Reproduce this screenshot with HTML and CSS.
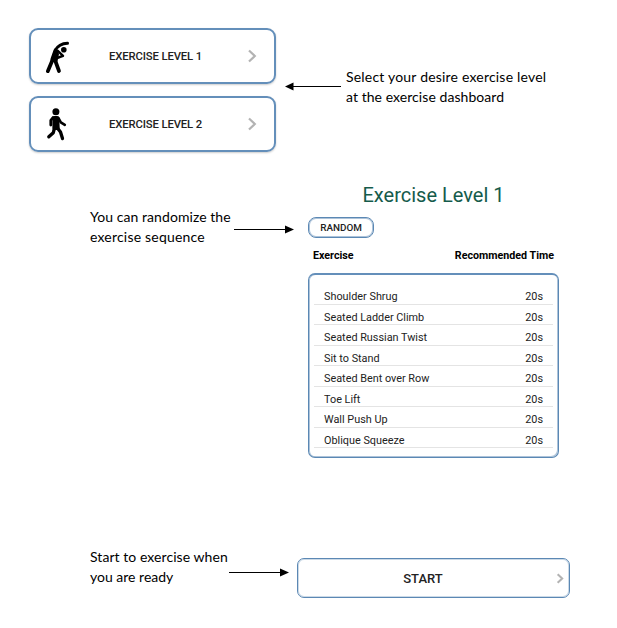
FILE: index.html
```html
<!DOCTYPE html>
<html lang="en">
<head>
<meta charset="utf-8">
<title>Exercise guide</title>
<link rel="stylesheet" href="styles.css">
</head>
<body>
<section class="step step-level">
  <div class="levels">
    <div class="level">
      <svg class="figure" viewBox="0 0 26 36" fill="none" stroke="#000" stroke-linecap="round" stroke-linejoin="round">
        <circle cx="18.8" cy="9.7" r="2.8" fill="#000" stroke="none"/>
        <path d="M22.5 3.2C16.5 3.4 12.5 6 10 10.5L7 19" stroke-width="3"/>
        <path d="M10.5 9L13 14L11.5 21L6.5 21Z" fill="#000" stroke-width="2"/>
        <path d="M12.5 10.5L18 15.8L12 18" stroke-width="2.4"/>
        <path d="M7.5 20L2.8 31.2M10 20L14 31" stroke-width="3.7"/>
      </svg>
      <span class="level-name">EXERCISE LEVEL 1</span>
      <svg class="chevron" viewBox="0 0 10 14"><path d="M2 1.5L7.8 7L2 12.5"/></svg>
    </div>
    <div class="level">
      <svg class="figure" viewBox="0 0 26 36" fill="none" stroke="#000" stroke-linecap="round" stroke-linejoin="round">
        <circle cx="10.9" cy="3.8" r="3.5" fill="#000" stroke="none"/>
        <path d="M9.4 10H12.3L12.7 20L9.4 20Z" fill="#000" stroke-width="4"/>
        <path d="M8 9.5L5.8 12.3V17" stroke-width="2.8"/>
        <path d="M13.5 10L15.8 14.3L19.8 16.8" stroke-width="2.6"/>
        <path d="M9.5 20L8.3 24.7L3.8 28.8M12.4 20L15.5 24L17.5 30.6" stroke-width="3.3"/>
      </svg>
      <span class="level-name">EXERCISE LEVEL 2</span>
      <svg class="chevron" viewBox="0 0 10 14"><path d="M2 1.5L7.8 7L2 12.5"/></svg>
    </div>
  </div>
  <svg class="arrow arrow-left" width="56" height="9" viewBox="0 0 56 9"><path d="M0 4.5L8.5 .5V8.5Z"/><path d="M8 4H56V5H8Z"/></svg>
  <p class="note"><span class="wide">Select your desire exercise level</span><br><span class="normal">at the exercise dashboard</span></p>
</section>

<section class="step step-random">
  <p class="note"><span class="normal">You can randomize the</span><br><span class="wide">exercise sequence</span></p>
  <svg class="arrow arrow-random" width="60" height="9" viewBox="0 0 60 9"><path d="M60 4.5L51 .5V8.5Z"/><path d="M0 4H52V5H0Z"/></svg>
  <div class="plan">
    <h1 class="title">Exercise Level 1</h1>
    <button class="random">RANDOM</button>
    <div class="heads"><span>Exercise</span><span>Recommended Time</span></div>
    <ul class="list">
      <li><span>Shoulder Shrug</span><span>20s</span></li>
      <li><span>Seated Ladder Climb</span><span>20s</span></li>
      <li><span>Seated Russian Twist</span><span>20s</span></li>
      <li><span>Sit to Stand</span><span>20s</span></li>
      <li><span>Seated Bent over Row</span><span>20s</span></li>
      <li><span>Toe Lift</span><span>20s</span></li>
      <li><span>Wall Push Up</span><span>20s</span></li>
      <li><span>Oblique Squeeze</span><span>20s</span></li>
    </ul>
  </div>
</section>

<section class="step step-start">
  <p class="note"><span class="normal">Start to exercise when</span><br><span>you are ready</span></p>
  <svg class="arrow arrow-start" width="60" height="9" viewBox="0 0 60 9"><path d="M60 4.5L51 .5V8.5Z"/><path d="M0 4H52V5H0Z"/></svg>
  <div class="start">
    <span class="start-label">START</span>
    <svg class="chevron chevron-small" viewBox="0 0 10 14"><path d="M2 1.5L7.8 7L2 12.5"/></svg>
  </div>
</section>
</body>
</html>
```
FILE: styles.css
```css
* { box-sizing: border-box; }
body {
  margin: 0;
  width: 617px;
  height: 628px;
  background: #fff;
  color: #222;
  font-family: Roboto, sans-serif;
  overflow: hidden;
}
.step { display: flex; align-items: flex-start; }
.step-level { padding: 28px 0 0 29px; height: 182px; }
.step-random { padding-left: 90px; height: 368px; }
.step-start { padding-left: 90px; }

.levels { display: flex; flex-direction: column; gap: 12px; }
.level {
  display: grid;
  grid-template-columns: 63px 95px 1fr;
  align-items: center;
  width: 247px;
  height: 56px;
  padding-left: 14px;
  padding-right: 17px;
  border: 2px solid #648fba;
  border-radius: 9px;
  box-shadow: 0 1px 2px #0003;
}
.figure { width: 26px; height: 36px; margin-top: 3px; }
.level-name { padding-top: 1px; font-size: 11.3px; font-weight: 500; letter-spacing: -.12px; text-align: center; white-space: nowrap; }
.chevron { width: 10px; height: 14px; fill: none; stroke: #b3b3b3; stroke-width: 2.2; justify-self: end; }
.chevron-small { width: 8px; height: 11px; stroke-width: 2.6; justify-self: center; }

.note {
  margin: 0;
  flex: none;
  font: 14px/20px Lato, sans-serif;
  color: #000;
  white-space: nowrap;
}
.note .wide { letter-spacing: .2px; }
.note .normal { letter-spacing: .06px; }
.arrow { flex: none; display: block; }
.arrow-left { margin: 54px 5px 0 9px; }
.step-level .note { margin-top: 39px; }
.step-random .note { width: 144px; margin-top: 25px; }
.arrow-random { margin-top: 43px; }
.plan { width: 251px; margin-left: 14px; }

.title { margin: 0; height: 35px; font-size: 20px; line-height: 26px; font-weight: 400; color: #155b4b; text-align: center; }
.random {
  display: block;
  width: 66px;
  height: 21px;
  padding: 0;
  border: 1px solid #5b88b4;
  border-radius: 8px;
  box-shadow: inset 0 0 0 1px #5b88b480;
  background: #fff;
  color: #222;
  font: 500 9.9px/19px Roboto, sans-serif;
}
.heads { display: flex; justify-content: space-between; padding: 0 5px; margin-top: 10px; font-size: 10.7px; line-height: 16px; font-weight: 700; color: #000; }
.list {
  margin: 9px 0 0;
  padding: 9px 5px 0;
  height: 185px;
  list-style: none;
  border: 1px solid #5b88b4;
  border-width: 2px 1px 1px 1px;
  border-color: #648fba #5b88b4 #5b88b4;
  box-shadow: inset 1px 0 0 #5b88b480, inset -1px -1px 0 #5b88b480;
  border-radius: 7px;
}
.list li {
  display: flex;
  justify-content: space-between;
  height: 20.5px;
  padding: 5px 10px 0;
  border-bottom: 1px solid #e4e4e4;
  font-size: 10.85px;
  line-height: 15px;
}
.step-start .note { width: 139px; margin-top: -3px; }
.arrow-start { margin-top: 18px; }
.start {
  display: grid;
  grid-template-columns: 1fr 10px;
  align-items: center;
  width: 273px;
  height: 40px;
  margin: 8px 0 0 8px;
  padding-right: 4px;
  border: 1px solid #5b88b4;
  border-radius: 7px;
  box-shadow: inset 0 0 0 1px #5b88b450;
}
.start-label { padding-right: 7px; font-size: 13px; font-weight: 500; text-align: center; }
```
